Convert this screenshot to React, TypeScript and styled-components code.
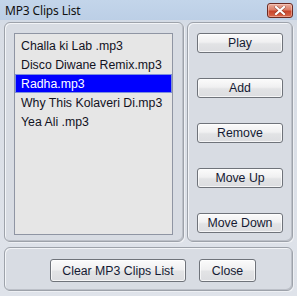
import React from "react";
import styled, { createGlobalStyle } from "styled-components";

const Global = createGlobalStyle`
  html, body { margin: 0; padding: 0; }
  body { background: #dde2e9; font-family: "Liberation Sans", Arial, sans-serif; }
`;

const Window = styled.div`
  width: 297px;
  height: 296px;
  display: flex;
  flex-direction: column;
  background: linear-gradient(#c9d6e6 0px, #d8dde5 30px, #dfe3ea 296px);
  box-sizing: border-box;
  overflow: hidden;
`;

const TitleBar = styled.div`
  height: 20px;
  display: flex;
  align-items: center;
  justify-content: space-between;
  padding: 0 4px 0 5px;
  background: linear-gradient(#c3d5ea, #bccfe6);
  flex-shrink: 0;
`;

const Title = styled.span`
  font-family: "Noto Sans", "Open Sans", sans-serif;
  font-size: 12px;
  color: #111;
  letter-spacing: -0.15px;
`;

const CloseX = styled.div`
  box-sizing: border-box;
  width: 26px;
  height: 15px;
  border: 1px solid #6b2a22;
  border-radius: 3px;
  background: linear-gradient(#eab0a0 0%, #dc7d66 45%, #c7432b 55%, #d9684c 100%);
  box-shadow: inset 0 0 0 1px rgba(255, 220, 210, 0.45);
  display: flex;
  align-items: center;
  justify-content: center;
`;

const Body = styled.div`
  flex: 1;
  display: flex;
  flex-direction: column;
  padding: 2px 4px 5px 4px;
  gap: 5px;
`;

const TopRow = styled.div`
  display: flex;
  gap: 3px;
  height: 220px;
`;

const Panel = styled.div<{ $w?: number }>`
  box-sizing: border-box;
  ${(p) => (p.$w ? `width: ${p.$w}px;` : "flex: 1;")}
  border: 1px solid #9da2aa;
  border-radius: 6px;
  background: #d8dce3;
  box-shadow: inset 1px 1px 0 #f2f4f7, inset -1px -1px 0 #bcc0c8, 1px 1px 0 #eef0f4;
`;

const ListPanel = styled(Panel)`
  padding: 10px 10px 6px 9px;
  display: flex;
`;

const ListBox = styled.div`
  flex: 1;
  border: 1px solid #8f95a3;
  background: #e6e6e6;
  padding-top: 2px;
  display: flex;
  flex-direction: column;
`;

const Row = styled.div<{ $sel?: boolean }>`
  height: 19px;
  box-sizing: border-box;
  display: flex;
  align-items: center;
  padding-left: 5px;
  font-size: 12.3px;
  color: ${(p) => (p.$sel ? "#ffffff" : "#12121e")};
  background: ${(p) => (p.$sel ? "#0000ff" : "transparent")};
  border: 1px solid ${(p) => (p.$sel ? "#7d8fdc" : "transparent")};
  white-space: nowrap;
`;

const ButtonPanel = styled(Panel)`
  padding: 10px 9px 0 9px;
  display: flex;
  flex-direction: column;
  gap: 25px;
`;

const Btn = styled.button<{ $w?: number; $h?: number }>`
  box-sizing: border-box;
  width: ${(p) => (p.$w ? `${p.$w}px` : "100%")};
  height: ${(p) => p.$h ?? 20}px;
  padding: 0;
  border: 1px solid #6f737a;
  border-radius: 3px;
  background: linear-gradient(#fbfbfb 0%, #f0f0f1 45%, #e2e3e5 55%, #dcdde0 100%);
  box-shadow: inset 0 0 0 1px rgba(255, 255, 255, 0.7);
  font-family: "Liberation Sans", Arial, sans-serif;
  font-size: 12.3px;
  color: #151a33;
  cursor: default;
  display: flex;
  align-items: center;
  justify-content: center;
  flex-shrink: 0;
`;

const BottomPanel = styled(Panel)`
  flex: none;
  height: 44px;
  display: flex;
  gap: 13px;
  padding: 11px 0 0 45px;
`;

const items = [
  "Challa ki Lab .mp3",
  "Disco Diwane Remix.mp3",
  "Radha.mp3",
  "Why This Kolaveri Di.mp3",
  "Yea Ali .mp3",
];

export default function App() {
  return (
    <>
      <Global />
      <Window>
        <TitleBar>
          <Title>MP3 Clips List</Title>
          <CloseX>
            <svg width="12" height="9" viewBox="0 0 12 9">
              <path d="M2 1 L10 8 M10 1 L2 8" stroke="#5a1d14" strokeWidth="3.4" strokeLinecap="square" opacity="0.45" />
              <path d="M2 1 L10 8 M10 1 L2 8" stroke="#ffffff" strokeWidth="2.2" strokeLinecap="square" />
            </svg>
          </CloseX>
        </TitleBar>
        <Body>
          <TopRow>
            <ListPanel $w={180}>
              <ListBox>
                {items.map((t, i) => (
                  <Row key={t} $sel={i === 2}>
                    {t}
                  </Row>
                ))}
              </ListBox>
            </ListPanel>
            <ButtonPanel>
              <Btn>Play</Btn>
              <Btn>Add</Btn>
              <Btn>Remove</Btn>
              <Btn>Move Up</Btn>
              <Btn>Move Down</Btn>
            </ButtonPanel>
          </TopRow>
          <BottomPanel>
            <Btn $w={136} $h={23}>Clear MP3 Clips List</Btn>
            <Btn $w={57} $h={23}>Close</Btn>
          </BottomPanel>
        </Body>
      </Window>
    </>
  );
}
